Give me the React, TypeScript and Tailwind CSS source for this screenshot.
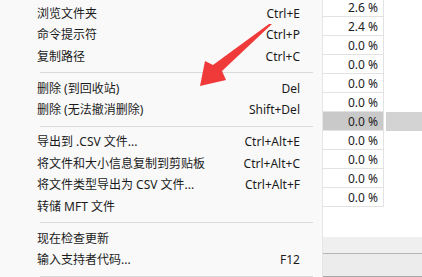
import React from "react";

type Item = { label: string; keys?: string } | "sep";

const menu: Item[] = [
  { label: "浏览文件夹", keys: "Ctrl+E" },
  { label: "命令提示符", keys: "Ctrl+P" },
  { label: "复制路径", keys: "Ctrl+C" },
  "sep",
  { label: "删除 (到回收站)", keys: "Del" },
  { label: "删除 (无法撤消删除)", keys: "Shift+Del" },
  "sep",
  { label: "导出到 .CSV 文件...", keys: "Ctrl+Alt+E" },
  { label: "将文件和大小信息复制到剪贴板", keys: "Ctrl+Alt+C" },
  { label: "将文件类型导出为 CSV 文件...", keys: "Ctrl+Alt+F" },
  { label: "转储 MFT 文件" },
  "sep",
  { label: "现在检查更新" },
  { label: "输入支持者代码...", keys: "F12" },
  "sep",
];

const rows = ["2.6 %", "2.4 %", "0.0 %", "0.0 %", "0.0 %", "0.0 %", "0.0 %", "0.0 %", "0.0 %", "0.0 %", "0.0 %"];
const selectedRow = 6;

const App = () => {
  return (
    <div
      className="relative w-[422px] h-[277px] overflow-hidden flex bg-white"
      style={{ fontFamily: '"Noto Sans", "Noto Sans CJK SC", sans-serif' }}
    >
      {/* context menu */}
      <div className="w-[323px] shrink-0 bg-[#f9f9f9] border-r border-[#e6e6e6] pt-[3px] text-[12px] text-[#1b1b1b]">
        {menu.map((item, i) =>
          item === "sep" ? (
            <div key={i} className="h-[10.5px] flex items-center pl-[40px] pr-[9px]">
              <div className="h-px w-full bg-[#dadada]" />
            </div>
          ) : (
            <div key={i} className="h-[21.5px] flex items-center justify-between pl-[37px] pr-[22px] leading-none">
              <span>{item.label}</span>
              {item.keys && <span>{item.keys}</span>}
            </div>
          )
        )}
      </div>

      {/* list behind the menu */}
      <div className="flex-1 flex flex-col">
        <div className="mt-[-2px]">
          {rows.map((v, i) => (
            <div key={i} className="h-[19px] flex">
              <div
                className={
                  i === selectedRow
                    ? "w-[61px] h-full flex items-center justify-end pt-[2px] pr-[5px] bg-[#c9c9c9] border-b border-r border-[#e2e2e2] text-[12px] text-[#222]"
                    : "w-[61px] h-full flex items-center justify-end pt-[2px] pr-[5px] bg-white border-b border-r border-[#e2e2e2] text-[12px] text-[#222]"
                }
              >
                {v}
              </div>
              {i === selectedRow && <div className="flex-1 ml-[2px] h-full bg-[#d3d3d3]" />}
            </div>
          ))}
        </div>
        <div className="h-[30px]" />
        <div className="h-[16px] bg-[#efefef]" />
        <div className="h-px bg-[#b4b4b4]" />
        <div className="h-[22px] bg-[#ececec]" />
        <div className="h-px bg-[#a8a8a8]" />
      </div>

      {/* red annotation arrow */}
      <svg className="absolute left-0 top-0" width="422" height="277" viewBox="0 0 422 277">
        <polygon
          points="272,24 222,71 226,80 200,86 205,61 213,65 269,24"
          fill="#f03a3a"
        />
      </svg>
    </div>
  );
};

export default App;
